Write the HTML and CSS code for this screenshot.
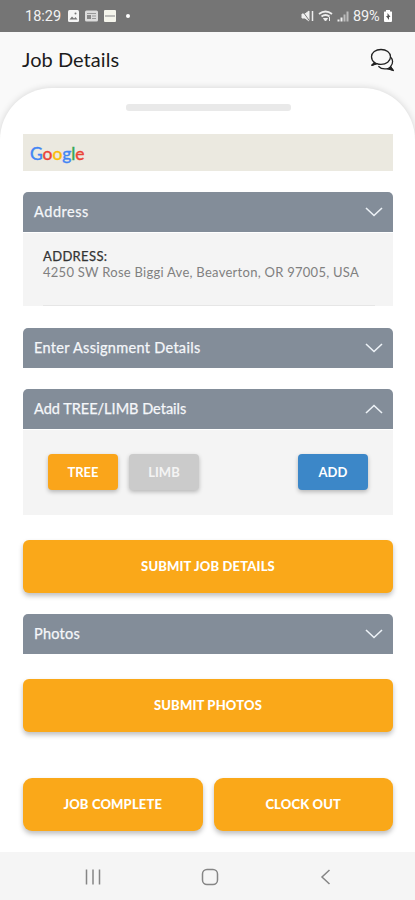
FILE: index.html
```html
<!DOCTYPE html>
<html lang="en">
<head>
    <meta charset="UTF-8">
    <meta name="viewport" content="width=device-width, initial-scale=1.0">
    <title>Job Details</title>
    <link rel="stylesheet" href="styles.css">
</head>
<body>
    <!-- Status bar -->
    <div class="status-bar">
        <span class="clock">18:29</span>
        <svg class="status-left" width="66" height="14" viewBox="0 0 66 14">
            <rect x="1" y="1" width="11" height="12" rx="1.5" fill="#f4f4f4"/>
            <path d="M2.5 10.5l2.5-3 2 2 1.5-1.5 2 2.5z" fill="#777"/>
            <circle cx="8.5" cy="4.5" r="1" fill="#777"/>
            <rect x="18" y="1.5" width="13" height="11" rx="1.5" fill="#dcdcdc"/>
            <path d="M20 4.5h9M25 7h4M25 9.5h4" stroke="#999"/>
            <rect x="20" y="6" width="4" height="4" fill="#888"/>
            <rect x="37" y="1" width="12" height="12" rx="1" fill="#f5f5ec"/>
            <path d="M38 7h10" stroke="#aaa" stroke-width="1.5"/>
            <circle cx="61" cy="7" r="2" fill="#fff"/>
        </svg>
        <svg class="status-right" width="50" height="14" viewBox="0 0 50 14" fill="none" stroke="#eee">
            <path d="M1 5h3l4-3v10L4 9H1z" fill="#eee"/>
            <path d="M1 1.5l8 11" stroke="#777"/>
            <path d="M11.5 2v10" stroke-width="1.5"/>
            <path d="M18 5q6.5-5 13 0M20.5 7.5q4-3 8 0" stroke-width="1.8"/>
            <path d="M22.5 9.5h4l-2 2.5z" fill="#eee"/>
            <path d="M28.5 8v4"/>
            <path d="M37.5 12.5v-2M40.5 12.5v-4" stroke-width="2"/>
            <path d="M43.5 12.5v-7M46.5 12.5v-10" stroke-width="2" stroke="#bbb"/>
        </svg>
        <span class="battery-text">89%</span>
        <svg width="10" height="14" viewBox="0 0 10 14">
            <path d="M3 1h4v1.5h1.5q.5 0 .5.5v9q0 1-1 1H2q-1 0-1-1V3q0-.5.5-.5H3z" fill="#fff"/>
            <path d="M4.5 4v3H3l3 4V8h1.5z" fill="#555"/>
        </svg>
    </div>

    <div class="header">
        <h1>Job Details</h1>
        <svg width="24" height="24" viewBox="0 0 24 24" fill="none" stroke="#222" stroke-width="1.3">
            <path d="M4.5 14.5C2.5 13 1.5 11 1.5 8.8 1.5 4.6 5.7 1.5 11 1.5s9.5 3.1 9.5 7.3-4.2 7.6-9.5 7.6c-1.600 0-3-.3-4.200-.8L1.700 17.500c1.400-1 2.300-2 2.800-3z"/>
            <path d="M21 9.500c1 1.200 1.600 2.500 1.600 4 0 2-.7 3.700-2 5 .3 1.200 1.200 2.400 2.400 3.600l-5.100-1.500c-3.500.8-7.300 0-9.500-2.400"/>
            <path d="M1.500 17.500l3-3 2 1.200zM23 22.200l-2.500-3.200-2.500 1.700z" fill="#222"/>
        </svg>
    </div>

    <!-- Main sheet -->
    <div class="sheet">
        <div class="handle"></div>

        <div class="map">
            <div class="google"><span class="blue">G</span><span class="red">o</span><span class="yellow">o</span><span class="blue">g</span><span class="green">l</span><span class="red">e</span></div>
        </div>

        <div class="panel address">
            <div class="panel-title">
                <span class="t-address">Address</span>
                <svg class="chevron" viewBox="0 0 18 10"><path d="M1 1l8 7.500L17 1"/></svg>
            </div>
            <div class="panel-body">
                <div class="address-label">ADDRESS:</div>
                <div class="address-text">4250 SW Rose Biggi Ave, Beaverton, OR 97005, USA</div>
                <div class="line"></div>
            </div>
        </div>

        <div class="panel assignment">
            <div class="panel-title">
                <span class="t-assignment">Enter Assignment Details</span>
                <svg class="chevron" viewBox="0 0 18 10"><path d="M1 1l8 7.500L17 1"/></svg>
            </div>
        </div>

        <div class="panel tree-limb">
            <div class="panel-title">
                <span class="t-tree">Add TREE/LIMB Details</span>
                <svg class="chevron" viewBox="0 0 18 10"><path d="M1 9l8-7.500L17 9"/></svg>
            </div>
            <div class="panel-body actions">
                <button class="small orange">TREE</button>
                <button class="small grey">LIMB</button>
                <button class="small add">ADD</button>
            </div>
        </div>

        <button class="submit b-details">SUBMIT JOB DETAILS</button>

        <div class="panel photos">
            <div class="panel-title">
                <span class="t-photos">Photos</span>
                <svg class="chevron" viewBox="0 0 18 10"><path d="M1 1l8 7.500L17 1"/></svg>
            </div>
        </div>

        <button class="submit b-photos">SUBMIT PHOTOS</button>

        <div class="footer-buttons">
            <button class="submit b-complete">JOB COMPLETE</button>
            <button class="submit b-clock">CLOCK OUT</button>
        </div>
    </div>

    <!-- Android navigation -->
    <div class="nav-bar">
        <svg width="18" height="18" viewBox="0 0 18 18"><path d="M2.500 1.500v15M9 1.500v15M15.500 1.500v15"/></svg>
        <svg width="18" height="18" viewBox="0 0 18 18"><rect x="1.500" y="1.500" width="15" height="15" rx="4.500"/></svg>
        <svg width="18" height="18" viewBox="0 0 18 18"><path d="M12.500 2L5 9l7.500 7"/></svg>
    </div>
</body>
</html>
```

FILE: styles.css
```css
* {
    box-sizing: border-box;
}

body {
    margin: 0;
    height: 900px;
    display: flex;
    flex-direction: column;
    overflow: hidden;
    background-color: #f9f9f9;
    font-family: Lato, "Open Sans", sans-serif;
}

svg {
    display: block;
    flex-shrink: 0;
}

/* Status bar */
.status-bar {
    height: 32px;
    flex-shrink: 0;
    display: flex;
    align-items: center;
    padding: 0 22px 0 25px;
    background-color: #757575;
    color: #f2f2f2;
    font-family: Roboto, sans-serif;
    font-size: 14.5px;
}

.clock {
    width: 42px;
}

.status-right {
    margin-left: auto;
    margin-right: 2px;
}

.battery-text {
    width: 30px;
    font-size: 14.5px;
    letter-spacing: -0.2px;
}

/* Header */
.header {
    height: 56px;
    flex-shrink: 0;
    display: flex;
    align-items: center;
    justify-content: space-between;
    padding: 0 21px 0 22px;
}

h1 {
    margin: 0;
    padding-bottom: 2px;
    font-size: 20px;
    font-weight: 400;
    letter-spacing: 0.05px;
    color: #1c1c1c;
}

/* White sheet with rounded top */
.sheet {
    flex: 1;
    display: flex;
    flex-direction: column;
    padding: 16px 22px 0 23px;
    background-color: #fff;
    border-radius: 52px 52px 0 0;
    box-shadow: 0 0 7px rgba(0, 0, 0, 0.15);
}

.handle {
    width: 165px;
    height: 7px;
    margin: 0 auto 23px;
    border-radius: 3px;
    background-color: #e9e9e9;
}

.map {
    height: 37px;
    margin-bottom: 21px;
    padding: 9px 7px;
    background-color: #ebe9e0;
}

.google {
    font-family: Lato, sans-serif;
    font-size: 17.5px;
    font-weight: 400;
    line-height: 21px;
    letter-spacing: -0.1px;
    -webkit-text-stroke: 0.4px;
}

.blue { color: #4285f4; }
.red { color: #ea4335; }
.yellow { color: #fbbc05; }
.green { color: #34a853; }

/* Panels */
.panel-title {
    height: 40px;
    display: flex;
    align-items: center;
    justify-content: space-between;
    padding: 0 10px 0 11px;
    border-radius: 5px 5px 0 0;
    background-color: #838d99;
    color: #f5f7fa;
    font-size: 14.5px;
    -webkit-text-stroke: 0.25px #f5f7fa;
}

.panel-title span {
    padding-bottom: 1px;
}

.t-address {
    letter-spacing: 0.55px;
}

.t-assignment {
    letter-spacing: 0.3px;
}

.t-tree {
    letter-spacing: 0;
}

.t-photos {
    letter-spacing: 0.25px;
}

.chevron {
    width: 18px;
    height: 10px;
    fill: none;
    stroke: #edf2f7;
    stroke-width: 1.6;
}

.panel-body {
    margin-top: 1px;
    background-color: #f4f4f4;
}

.address .panel-body {
    height: 73px;
    padding: 15px 18px 0 20px;
}

.address-label {
    font-size: 13px;
    line-height: 16px;
    letter-spacing: 0.35px;
    color: #333;
    -webkit-text-stroke: 0.25px #333;
}

.address-text {
    font-size: 13px;
    line-height: 17px;
    letter-spacing: 0.27px;
    color: #808080;
    white-space: nowrap;
}

.line {
    height: 1px;
    margin-top: 24px;
    background-color: #e6e6e6;
}

.assignment {
    margin-top: 22px;
}

.tree-limb {
    margin-top: 21px;
}

.actions {
    height: 85px;
    display: flex;
    gap: 11px;
    padding: 24px 25px 0;
}

/* Buttons */
button {
    border: none;
    padding: 0;
    color: #fff;
    font-family: Lato, "Open Sans", sans-serif;
    font-weight: 700;
    cursor: pointer;
}

.small {
    width: 70px;
    height: 36px;
    padding-bottom: 1px;
    border-radius: 4px;
    font-size: 13px;
    box-shadow: 0 2px 4px rgba(0, 0, 0, 0.25);
}

.orange {
    background-color: #faa51a;
}

.grey {
    background-color: #cbcbcb;
    color: #f4f4f4;
}

.add {
    margin-left: auto;
    background-color: #3c87c8;
}

.submit {
    height: 53px;
    flex-shrink: 0;
    padding-bottom: 1px;
    border-radius: 6px;
    background-color: #faa819;
    font-size: 13px;
    font-weight: 900;
    letter-spacing: 0.15px;
    box-shadow: 0 3px 5px rgba(0, 0, 0, 0.25);
}

.b-details {
    margin-top: 25px;
}

.photos {
    margin-top: 21px;
}

.b-photos {
    margin-top: 25px;
}

.footer-buttons {
    display: grid;
    grid-template-columns: 1fr 1fr;
    gap: 11px;
    margin-top: 46px;
}

.footer-buttons .submit {
    border-radius: 9px;
}

/* Bottom navigation */
.nav-bar {
    height: 48px;
    flex-shrink: 0;
    display: flex;
    justify-content: space-between;
    align-items: center;
    padding: 2px 80px 0 84px;
    background-color: #f5f5f5;
    position: relative;
}

.nav-bar svg {
    fill: none;
    stroke: #858585;
    stroke-width: 1.5;
}
```
